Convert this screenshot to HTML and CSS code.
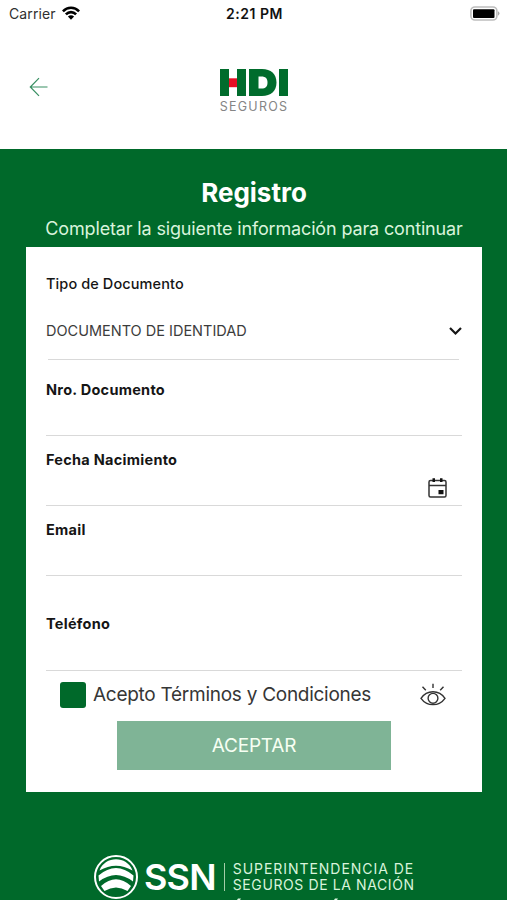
FILE: index.html
```html
<!DOCTYPE html>
<html lang="es">
<head>
<meta charset="utf-8">
<title>Registro</title>
<link rel="stylesheet" href="styles.css">
</head>
<body>
<header class="header">
  <div class="status">
    <div class="carrier"><span>Carrier</span>
      <svg width="18" height="15" viewBox="0 0 18 15" fill="none" stroke="#000" stroke-width="2.6"><path d="M.9 5.4C5.5.6 12.5.6 17.1 5.4M3.9 8.4C6.8 5.4 11.2 5.4 14.1 8.4"/><path d="M5.9 10.5Q9 7.8 12.1 10.5L9 13.8Z" fill="#000" stroke="none"/></svg>
    </div>
    <span class="time">2:21 PM</span>
    <svg class="battery" width="31" height="16" viewBox="0 0 31 16"><rect x="1.9" y="1" width="26" height="13" rx="4" fill="#fff" stroke="#bdbdbd" stroke-width="1.6"/><rect x="4" y="3.3" width="21.5" height="8.7" rx="1"/><path d="M29 5.3Q32 7.5 29 9.7Z" fill="#aaa"/></svg>
  </div>
  <div class="nav">
    <svg class="back" width="20" height="20" viewBox="0 0 20 20" fill="none" stroke="#388f62" stroke-width="1.2"><path d="M18.5 10H1.5M10 1.2L1.3 10L10 18.8"/></svg>
    <div class="brand">
      <svg width="68" height="28" viewBox="0 0 68 28" fill="#006c2c"><path d="M0 0H9V27H0ZM17 0H26V27H17Z"/><path d="M9 9.3H17V18.2H9Z" fill="#e50f24"/><path fill-rule="evenodd" d="M29 0H42C51 0 56.5 5 56.5 13.5S51 27 42 27H29ZM38.5 7.5V19.5H41.5C45.5 19.5 47.5 17.5 47.5 13.5S45.5 7.5 41.5 7.5Z"/><path d="M59 0H68V27H59Z"/></svg>
      <span class="brand-sub">SEGUROS</span>
    </div>
  </div>
</header>
<main>
  <h1><span>Registro</span></h1>
  <p class="subtitle">Completar la siguiente información para continuar</p>
  <form class="card">
    <div class="field type">
      <label>Tipo de Documento</label>
      <div class="select"><span>DOCUMENTO DE IDENTIDAD</span>
        <svg width="13" height="9" viewBox="0 0 13 9" fill="none" stroke="#161616" stroke-width="2.2"><path d="M1 1L6.5 6.5L12 1"/></svg>
      </div>
    </div>
    <div class="field doc"><label>Nro. Documento</label></div>
    <div class="field birth"><label>Fecha Nacimiento</label>
      <svg class="calendar" width="19" height="20" viewBox="0 0 19 20" fill="none" stroke="#333" stroke-width="1.5"><rect x="1" y="2.5" width="17" height="16.5" rx="1.5"/><path d="M1 7.5H18"/><path d="M4.5.3H7V4H4.5ZM12 .3H14.5V4H12ZM10.5 12H15.5V16.3H10.5Z" fill="#111" stroke="none"/></svg>
    </div>
    <div class="field email"><label>Email</label></div>
    <div class="field phone"><label>Teléfono</label></div>
    <div class="terms"><span class="check"></span><span class="terms-text">Acepto Términos y Condiciones</span>
      <svg class="eye" width="26" height="24" viewBox="0 0 26 24" fill="none" stroke="#333" stroke-width="1.4"><path d="M1 15.3C7 6.5 19 6.5 25 15.3C19 23.7 7 23.7 1 15.3Z"/><circle cx="13" cy="15.3" r="4.9"/><path d="M13 .7V5M2.5 3.7L5.8 7.2M23.5 3.7L20.2 7.2"/></svg>
    </div>
    <button type="button"><span>ACEPTAR</span></button>
  </form>
  <footer>
    <svg class="seal" width="46" height="46" viewBox="0 0 46 46"><circle cx="23" cy="23" r="21" fill="none" stroke="#fff" stroke-width="2"/><g fill="#fff"><path d="M6.500 16.500C12 1.500 34 1.500 39.500 16.500Q23 7 6.500 16.500Z"/><path d="M5.500 21.500Q23 6.500 40.500 21.500L40 27.500Q23 14.500 6 27.500Z"/><path d="M8 32Q23 18.500 38 32L34.500 37Q23 30 11.500 37Z"/></g></svg>
    <span class="ssn">SSN</span>
    <span class="divider"></span>
    <div class="agency"><span class="agency-top">SUPERINTENDENCIA DE</span><span>SEGUROS DE LA NACIÓN</span>
      <svg class="accents" width="110" height="2" viewBox="0 0 110 2" fill="#d9f4dc"><path d="M5 .6H8L7 2H4ZM102 .6H105L104 2H101Z"/></svg>
    </div>
  </footer>
</main>
</body>
</html>
```
FILE: styles.css
```css
* { box-sizing: border-box; }
body { margin: 0; height: 900px; overflow: hidden; background: #00692a; font-family: Inter, "Liberation Sans", sans-serif; color: #151515; }
svg { display: block; flex: none; }
span, label, p { white-space: nowrap; }
.header { height: 149px; background: #fff; }
.status { height: 28px; padding: 0 7px 0 9px; display: grid; grid-template-columns: 1fr auto 1fr; align-items: center; font-size: 14px; line-height: 17px; }
.carrier { display: flex; align-items: center; gap: 6px; letter-spacing: .1px; color: #303030; }
.carrier span { margin-top: -1px; }
.carrier svg { margin-top: -2px; }
.time { font-weight: 600; letter-spacing: .55px; color: #111; margin-top: -2px; }
.battery { justify-self: end; margin-top: -1px; }
.nav { display: grid; grid-template-columns: 1fr auto 1fr; align-items: start; padding-top: 41px; }
.back { margin: 8px 0 0 29px; }
.brand { display: flex; flex-direction: column; align-items: center; gap: 2px; width: 70px; }
.brand-sub { font-size: 12.5px; line-height: 15px; letter-spacing: 1.25px; margin-right: -1px; color: #858585; font-weight: 400; }
main { padding: 28px 25px 0 26px; }
h1 { margin: 0; height: 31px; line-height: 31px; text-align: center; font-size: 26px; font-weight: 700; color: #fff; }
.subtitle { margin: 8px 0 0; height: 31px; line-height: 26px; text-align: center; font-size: 18px; letter-spacing: -.15px; color: #d9f4dc; }
.card { height: 545px; background: #fff; padding: 0 20px; }
.field { border-bottom: 1px solid #d9d9d9; display: flex; justify-content: space-between; }
label { font-size: 14.5px; line-height: 20px; font-weight: 700; letter-spacing: .27px; }
.type { height: 113px; margin: 0 3px 0 2px; padding-top: 27px; flex-direction: column; justify-content: flex-start; gap: 27px; }
.type label { font-weight: 500; margin-left: -2px; letter-spacing: .1px; }
.select { display: flex; justify-content: space-between; align-items: center; margin: 0 -3px 0 -2px; font-size: 14.5px; line-height: 20px; color: #3c3c3c; }
.doc { height: 76px; padding-top: 20px; }
.birth { height: 70px; padding-top: 14px; }
.calendar { margin: 28px 15px -10px 0; }
.email { height: 70px; padding-top: 14px; }
.phone { height: 95px; padding-top: 38px; }
.terms { height: 50px; display: flex; align-items: center; padding: 0 16px 2px 14px; }
.check { width: 26px; height: 26px; border-radius: 3px; background: #00692a; margin-right: 7px; }
.terms-text { font-size: 19px; letter-spacing: -.27px; color: #363636; margin-top: -2px; }
.eye { margin-left: auto; }
button { display: block; width: 274px; height: 49px; margin: 0 auto 0 71px; padding: 0; border: 0; background: #7fb496; color: #f7fff3; font: 400 19px/49px Inter, "Liberation Sans", sans-serif; letter-spacing: -.2px; }
footer { display: flex; align-items: center; height: 46px; margin: 62px 0 0 67px; }
.ssn { font-size: 36px; line-height: 46px; font-weight: 600; letter-spacing: -.8px; color: #fff; margin-left: 5px; }
.divider { width: 1px; height: 28px; background: #a4cda8; margin: 0 8px; }
.agency { position: relative; display: flex; flex-direction: column; font-size: 14px; line-height: 16px; letter-spacing: .6px; color: #d9f4dc; }
.agency-top { letter-spacing: .95px; }
.accents { position: absolute; left: 0; top: 37px; }
```
